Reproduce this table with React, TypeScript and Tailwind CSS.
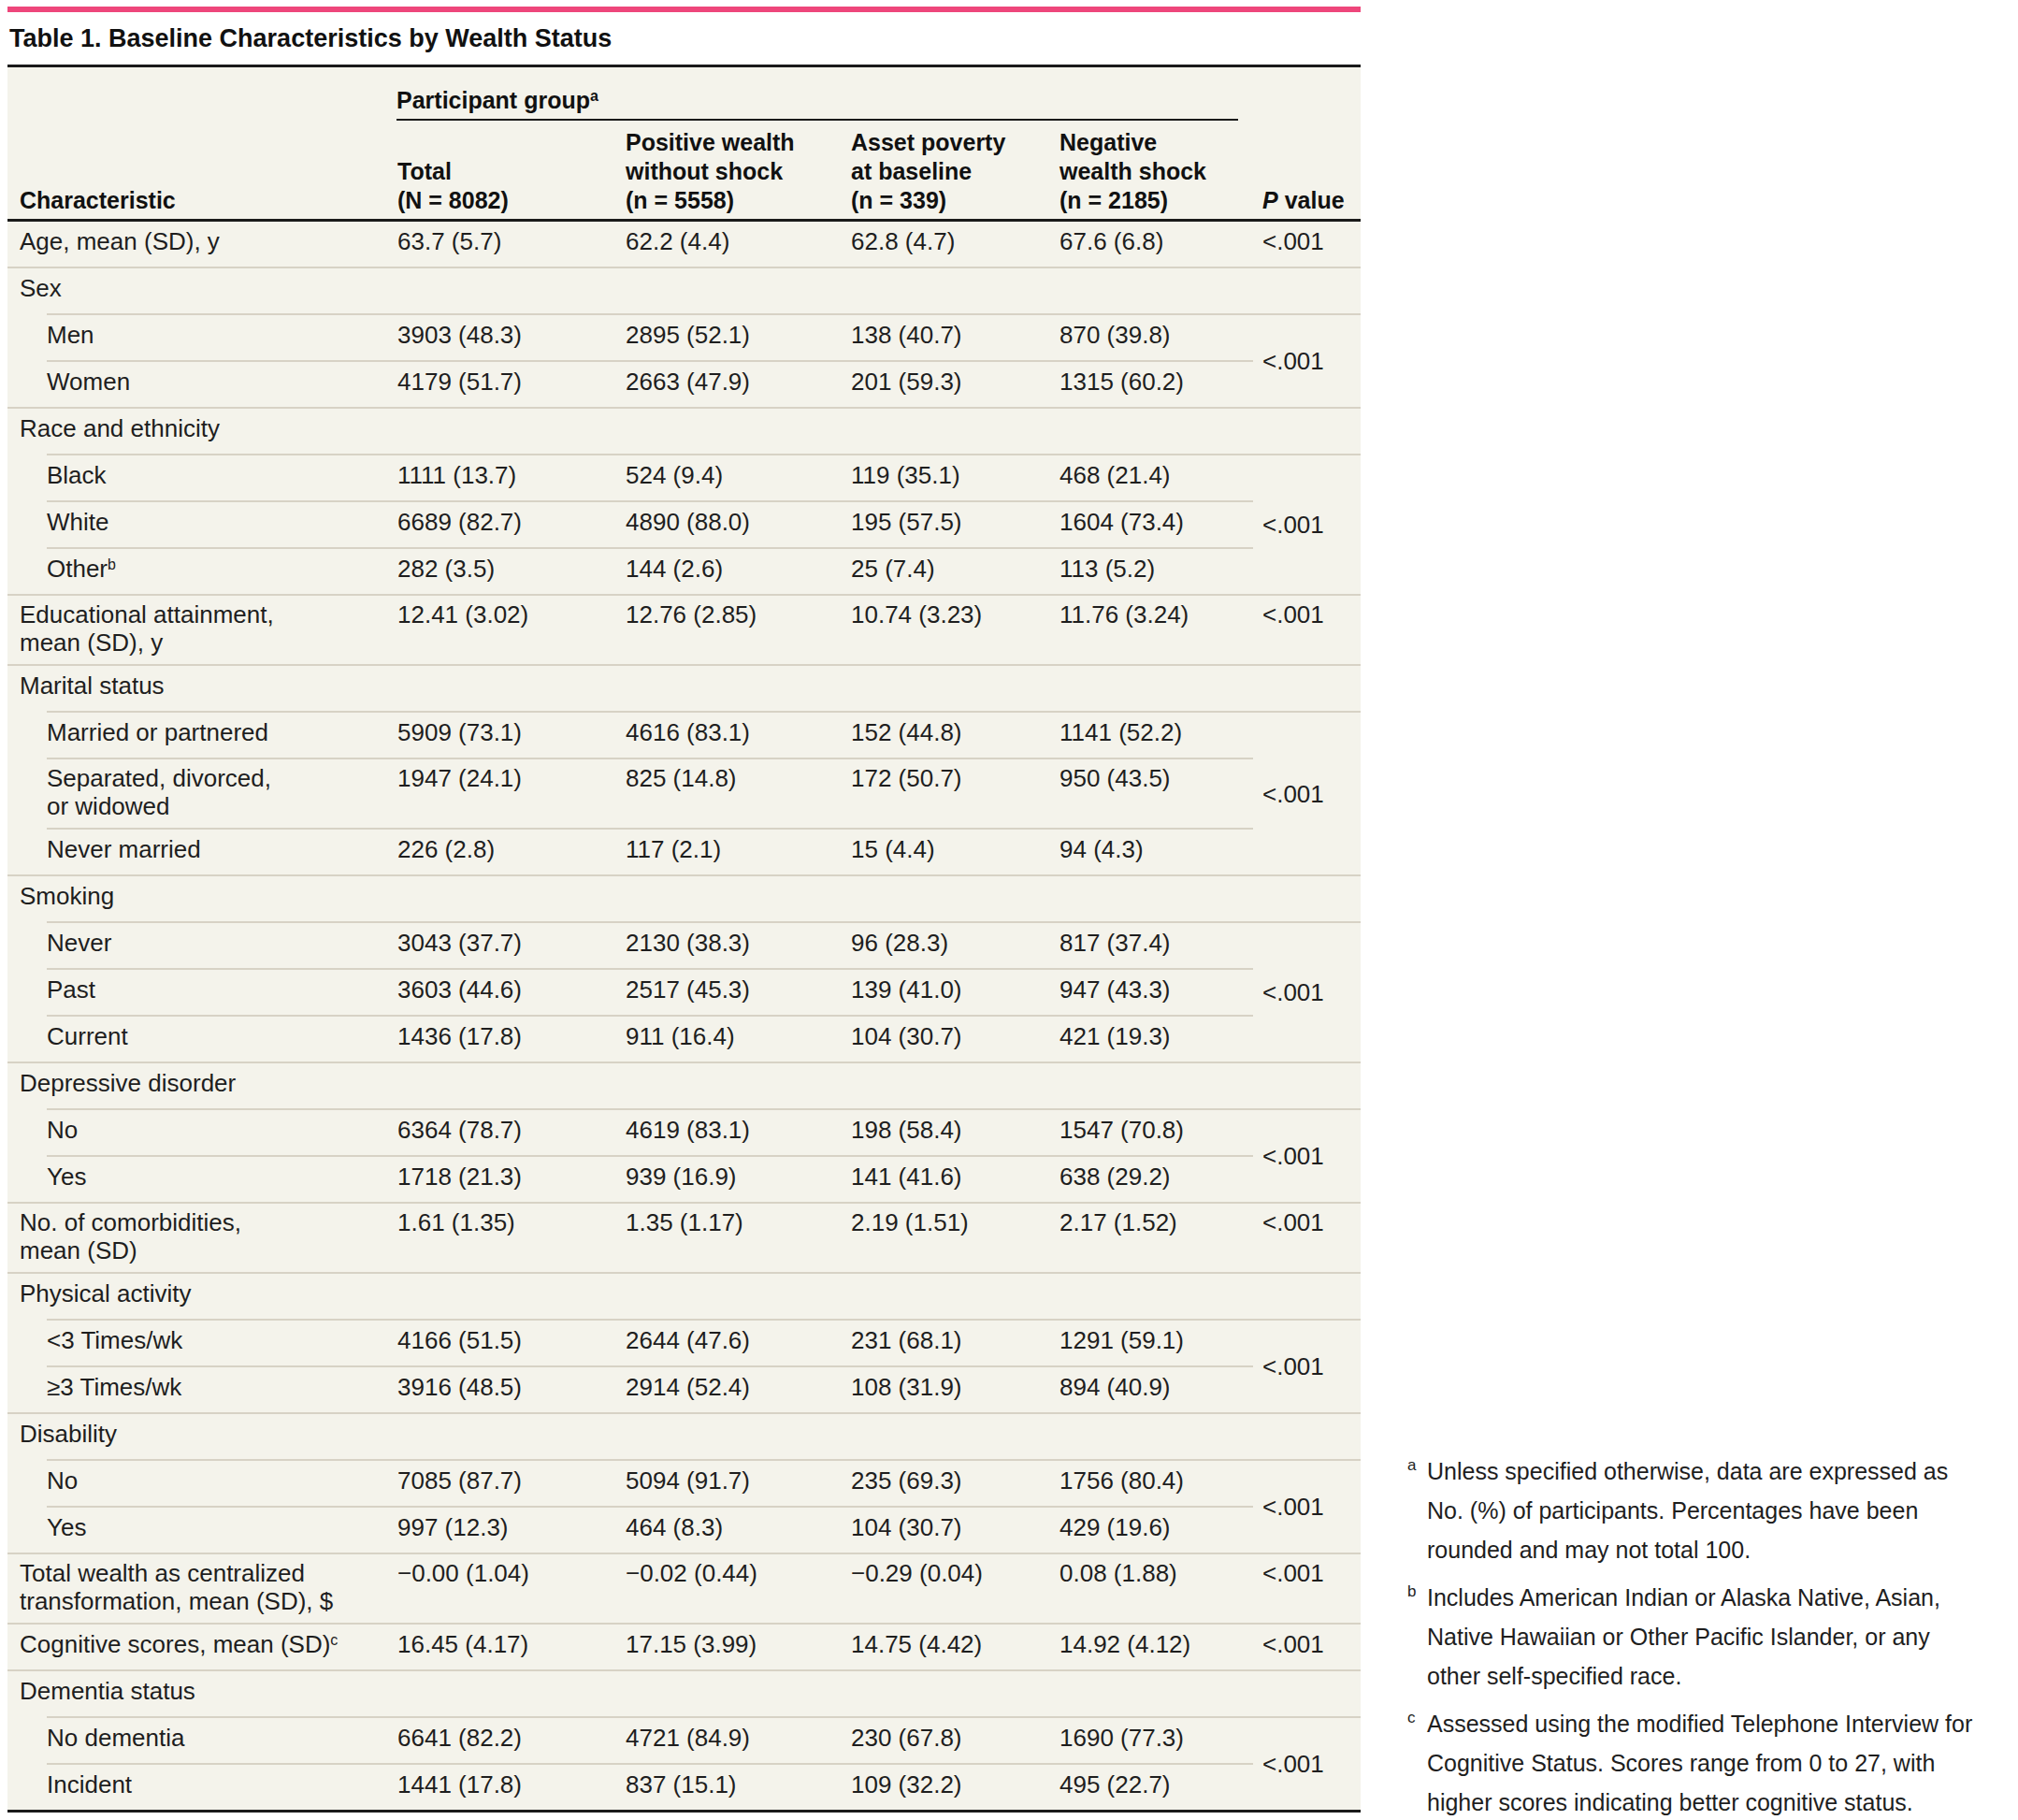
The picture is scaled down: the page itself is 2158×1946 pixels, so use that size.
import React from "react";

type Row = {
  label: React.ReactNode;
  values?: string[];
  p?: string;
  pSpan?: number;
  sub?: boolean;
  double?: boolean;
};

const rows: Row[] = [
  { label: "Age, mean (SD), y", values: ["63.7 (5.7)", "62.2 (4.4)", "62.8 (4.7)", "67.6 (6.8)"], p: "<.001", pSpan: 1 },
  { label: "Sex" },
  { label: "Men", sub: true, values: ["3903 (48.3)", "2895 (52.1)", "138 (40.7)", "870 (39.8)"], p: "<.001", pSpan: 2 },
  { label: "Women", sub: true, values: ["4179 (51.7)", "2663 (47.9)", "201 (59.3)", "1315 (60.2)"] },
  { label: "Race and ethnicity" },
  { label: "Black", sub: true, values: ["1111 (13.7)", "524 (9.4)", "119 (35.1)", "468 (21.4)"], p: "<.001", pSpan: 3 },
  { label: "White", sub: true, values: ["6689 (82.7)", "4890 (88.0)", "195 (57.5)", "1604 (73.4)"] },
  {
    label: (
      <>
        Other<sup className="text-[16px]">b</sup>
      </>
    ),
    sub: true,
    values: ["282 (3.5)", "144 (2.6)", "25 (7.4)", "113 (5.2)"],
  },
  {
    label: (
      <>
        Educational attainment,
        <br />
        mean (SD), y
      </>
    ),
    double: true,
    values: ["12.41 (3.02)", "12.76 (2.85)", "10.74 (3.23)", "11.76 (3.24)"],
    p: "<.001",
    pSpan: 1,
  },
  { label: "Marital status" },
  { label: "Married or partnered", sub: true, values: ["5909 (73.1)", "4616 (83.1)", "152 (44.8)", "1141 (52.2)"], p: "<.001", pSpan: 3 },
  {
    label: (
      <>
        Separated, divorced,
        <br />
        or widowed
      </>
    ),
    sub: true,
    double: true,
    values: ["1947 (24.1)", "825 (14.8)", "172 (50.7)", "950 (43.5)"],
  },
  { label: "Never married", sub: true, values: ["226 (2.8)", "117 (2.1)", "15 (4.4)", "94 (4.3)"] },
  { label: "Smoking" },
  { label: "Never", sub: true, values: ["3043 (37.7)", "2130 (38.3)", "96 (28.3)", "817 (37.4)"], p: "<.001", pSpan: 3 },
  { label: "Past", sub: true, values: ["3603 (44.6)", "2517 (45.3)", "139 (41.0)", "947 (43.3)"] },
  { label: "Current", sub: true, values: ["1436 (17.8)", "911 (16.4)", "104 (30.7)", "421 (19.3)"] },
  { label: "Depressive disorder" },
  { label: "No", sub: true, values: ["6364 (78.7)", "4619 (83.1)", "198 (58.4)", "1547 (70.8)"], p: "<.001", pSpan: 2 },
  { label: "Yes", sub: true, values: ["1718 (21.3)", "939 (16.9)", "141 (41.6)", "638 (29.2)"] },
  {
    label: (
      <>
        No. of comorbidities,
        <br />
        mean (SD)
      </>
    ),
    double: true,
    values: ["1.61 (1.35)", "1.35 (1.17)", "2.19 (1.51)", "2.17 (1.52)"],
    p: "<.001",
    pSpan: 1,
  },
  { label: "Physical activity" },
  { label: "<3 Times/wk", sub: true, values: ["4166 (51.5)", "2644 (47.6)", "231 (68.1)", "1291 (59.1)"], p: "<.001", pSpan: 2 },
  { label: "≥3 Times/wk", sub: true, values: ["3916 (48.5)", "2914 (52.4)", "108 (31.9)", "894 (40.9)"] },
  { label: "Disability" },
  { label: "No", sub: true, values: ["7085 (87.7)", "5094 (91.7)", "235 (69.3)", "1756 (80.4)"], p: "<.001", pSpan: 2 },
  { label: "Yes", sub: true, values: ["997 (12.3)", "464 (8.3)", "104 (30.7)", "429 (19.6)"] },
  {
    label: (
      <>
        Total wealth as centralized
        <br />
        transformation, mean (SD), $
      </>
    ),
    double: true,
    values: ["\u22120.00 (1.04)", "\u22120.02 (0.44)", "\u22120.29 (0.04)", "0.08 (1.88)"],
    p: "<.001",
    pSpan: 1,
  },
  {
    label: (
      <>
        Cognitive scores, mean (SD)<sup className="text-[16px]">c</sup>
      </>
    ),
    values: ["16.45 (4.17)", "17.15 (3.99)", "14.75 (4.42)", "14.92 (4.12)"],
    p: "<.001",
    pSpan: 1,
  },
  { label: "Dementia status" },
  { label: "No dementia", sub: true, values: ["6641 (82.2)", "4721 (84.9)", "230 (67.8)", "1690 (77.3)"], p: "<.001", pSpan: 2 },
  { label: "Incident", sub: true, values: ["1441 (17.8)", "837 (15.1)", "109 (32.2)", "495 (22.7)"] },
];

const SEP = "border-t-2 border-[#d7d2c5]";

function BodyRow({ r, first }: { r: Row; first: boolean }) {
  const pad = r.double ? "pt-[5px] pb-[8px]" : "pt-[6px] pb-[12px]";
  const border = first ? "" : SEP;
  const vals = r.values ?? ["", "", "", ""];
  const isGroupHeader = !r.values;
  return (
    <tr>
      {r.sub ? (
        <td className="pl-[42px] p-0 align-top">
          <div className={`${border} ${pad} pl-0`}>{r.label}</div>
        </td>
      ) : (
        <td className={`${border} ${pad} pl-[13px] pr-[8px] align-top`}>{r.label}</td>
      )}
      {vals.map((v, j) => (
        <td key={j} className={`${border} ${pad} pl-[10px] pr-[4px] align-top whitespace-nowrap`}>
          {v}
        </td>
      ))}
      {isGroupHeader ? (
        <td className={`${border} ${pad} pl-[10px] align-top`}></td>
      ) : r.p ? (
        <td
          rowSpan={r.pSpan}
          className={`${border} pl-[10px] ${r.pSpan && r.pSpan > 1 ? "align-middle" : `align-top ${pad}`}`}
        >
          {r.p}
        </td>
      ) : null}
    </tr>
  );
}

function Footnote({ mark, lines, className }: { mark: string; lines: string[]; className?: string }) {
  return (
    <div className={`flex items-start ${className ?? ""}`}>
      <span className="w-[21px] shrink-0 text-[17px] leading-[30px]">{mark}</span>
      <div className="whitespace-nowrap">
        {lines.map((l, i) => (
          <div key={i}>{l}</div>
        ))}
      </div>
    </div>
  );
}

export default function App() {
  return (
    <div
      className="flex items-start bg-white pl-[8px] w-[2158px] h-[1946px] text-[#1e1e1e]"
      style={{ fontFamily: '"Liberation Sans", Arial, sans-serif' }}
    >
      <div className="w-[1447px] shrink-0 flex flex-col">
        <div className="mt-[7px] h-[6px] bg-[#ee467b]" />
        <h1 className="mt-[12px] mb-[12px] pl-[2px] text-[27px] leading-[32px] font-bold text-[#111]">
          Table 1. Baseline Characteristics by Wealth Status
        </h1>
        <table className="w-[1447px] table-fixed border-separate border-spacing-0 bg-[#f4f3eb] border-t-[3px] border-b-[3px] border-[#1a1a1a] text-[26px] leading-[30px]">
          <colgroup>
            <col className="w-[407px]" />
            <col className="w-[244px]" />
            <col className="w-[241px]" />
            <col className="w-[223px]" />
            <col className="w-[217px]" />
            <col className="w-[115px]" />
          </colgroup>
          <thead className="font-bold text-[#111] text-[25px]">
            <tr>
              <th
                rowSpan={2}
                className="align-bottom text-left font-bold pl-[13px] pb-[4px] leading-[31px] border-b-[3px] border-[#1a1a1a]"
              >
                Characteristic
              </th>
              <th colSpan={4} className="align-top text-left font-bold pt-[21px] pl-[9px] pr-[16px]">
                <div className="border-b-2 border-[#1a1a1a] pb-[6px] leading-[28px]">
                  Participant group<sup className="text-[16px]">a</sup>
                </div>
              </th>
              <th
                rowSpan={2}
                className="align-bottom text-left font-bold pl-[10px] pb-[4px] leading-[31px] border-b-[3px] border-[#1a1a1a] whitespace-nowrap"
              >
                <i>P</i> value
              </th>
            </tr>
            <tr className="leading-[31px]">
              <th className="align-bottom text-left font-bold pl-[10px] pt-[8px] pb-[4px] border-b-[3px] border-[#1a1a1a]">
                Total
                <br />
                (N = 8082)
              </th>
              <th className="align-bottom text-left font-bold pl-[10px] pt-[8px] pb-[4px] border-b-[3px] border-[#1a1a1a] whitespace-nowrap">
                Positive wealth
                <br />
                without shock
                <br />
                (n = 5558)
              </th>
              <th className="align-bottom text-left font-bold pl-[10px] pt-[8px] pb-[4px] border-b-[3px] border-[#1a1a1a] whitespace-nowrap">
                Asset poverty
                <br />
                at baseline
                <br />
                (n = 339)
              </th>
              <th className="align-bottom text-left font-bold pl-[10px] pt-[8px] pb-[4px] border-b-[3px] border-[#1a1a1a] whitespace-nowrap">
                Negative
                <br />
                wealth shock
                <br />
                (n = 2185)
              </th>
            </tr>
          </thead>
          <tbody>
            {rows.map((r, i) => (
              <BodyRow key={i} r={r} first={i === 0} />
            ))}
          </tbody>
        </table>
      </div>
      <div className="self-end ml-[50px] mb-[-2px] text-[25px] leading-[42px] text-[#1e1e1e]">
        <Footnote
          mark="a"
          lines={[
            "Unless specified otherwise, data are expressed as",
            "No. (%) of participants. Percentages have been",
            "rounded and may not total 100.",
          ]}
        />
        <Footnote
          className="mt-[9px]"
          mark="b"
          lines={[
            "Includes American Indian or Alaska Native, Asian,",
            "Native Hawaiian or Other Pacific Islander, or any",
            "other self-specified race.",
          ]}
        />
        <Footnote
          className="mt-[9px]"
          mark="c"
          lines={[
            "Assessed using the modified Telephone Interview for",
            "Cognitive Status. Scores range from 0 to 27, with",
            "higher scores indicating better cognitive status.",
          ]}
        />
      </div>
    </div>
  );
}
